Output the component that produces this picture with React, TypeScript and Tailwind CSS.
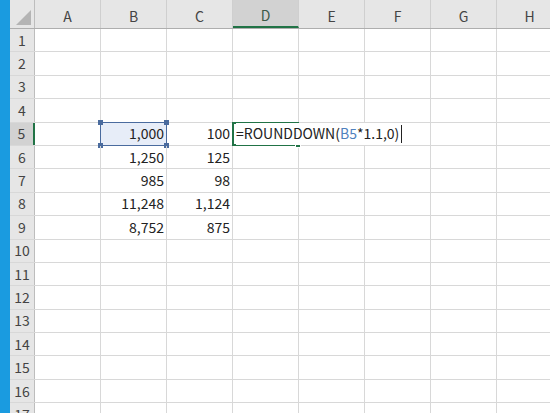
import React from 'react';

const cols = ['A', 'B', 'C', 'D', 'E', 'F', 'G', 'H'];
const rows = Array.from({ length: 17 }, (_, i) => i + 1);

const data: Record<number, { b: string; c: string }> = {
    5: { b: '1,000', c: '100' },
    6: { b: '1,250', c: '125' },
    7: { b: '985', c: '98' },
    8: { b: '11,248', c: '1,124' },
    9: { b: '8,752', c: '875' },
};

const Handle = ({ className }: { className: string }) => (
    <span className={`absolute w-[5px] h-[5px] bg-[#4a6b9e] ${className}`} />
);

export default function App() {
    return (
        <div
            className="w-[550px] h-[413px] overflow-hidden flex bg-white text-[#222]"
            style={{ fontFamily: '"Noto Sans CJK JP", "Noto Sans", sans-serif' }}
        >
            <div className="w-[10px] shrink-0 bg-[#1a9be0]" />
            <div className="flex-1 flex flex-col">
                {/* column headers */}
                <div className="flex h-[29px] shrink-0 bg-[#e6e6e6] border-b border-[#aeaeae]">
                    <div className="relative w-[25px] shrink-0 border-r border-[#bdbdbd]">
                        <svg className="absolute right-[3px] bottom-[3px]" width="15" height="15" viewBox="0 0 15 15">
                            <polygon points="15,0 15,15 0,15" fill="#b4b4b4" />
                        </svg>
                    </div>
                    {cols.map(c => (
                        <div
                            key={c}
                            className={`w-[66px] shrink-0 flex items-center justify-center text-[14px] pt-[4px] border-r border-[#cfcfcf] ${
                                c === 'D'
                                    ? 'bg-[#d2d2d2] text-[#3d5a48] border-b-2 border-b-[#217346]'
                                    : 'text-[#444]'
                            }`}
                        >
                            {c}
                        </div>
                    ))}
                </div>
                {rows.map(r => (
                    <div key={r} className="flex h-[23.4px] shrink-0 border-b border-[#d8d8d8]">
                        <div
                            className={`w-[25px] shrink-0 flex items-center justify-center text-[14px] ${
                                r === 5
                                    ? 'bg-[#d2d2d2] text-[#444] border-r-2 border-r-[#217346]'
                                    : 'bg-[#e6e6e6] text-[#444] border-r border-[#bdbdbd]'
                            }`}
                        >
                            {r}
                        </div>
                        {cols.map(c => {
                            const val = c === 'B' ? data[r]?.b : c === 'C' ? data[r]?.c : undefined;
                            const selB = r === 5 && c === 'B';
                            const editD = r === 5 && c === 'D';
                            return (
                                <div
                                    key={c}
                                    className={`relative w-[66px] shrink-0 border-r border-[#d8d8d8] flex items-center justify-end pr-[2px] text-[14px] ${
                                        selB ? 'bg-[#e7edf8]' : ''
                                    } ${editD ? 'z-10' : ''}`}
                                >
                                    {val}
                                    {selB && (
                                        <span className="absolute -left-[1px] -top-[1px] -right-[1px] -bottom-[1px] border-[1.5px] border-[#4a6b9e]">
                                            <Handle className="-left-[3px] -top-[3px]" />
                                            <Handle className="-right-[3px] -top-[3px]" />
                                            <Handle className="-left-[3px] -bottom-[3px]" />
                                            <Handle className="-right-[3px] -bottom-[3px]" />
                                        </span>
                                    )}
                                    {editD && (
                                        <>
                                            <span className="absolute -left-[1px] -top-[1px] -right-[1px] -bottom-[1px] border-2 border-[#217346]">
                                                <span className="absolute -right-[4px] -bottom-[4px] w-[6px] h-[6px] bg-[#217346] border border-white" />
                                            </span>
                                            <span className="absolute left-[3px] top-0 bottom-0 flex items-center whitespace-nowrap text-[14px] text-[#222] bg-white pr-[2px]">
                                                =ROUNDDOWN(<span className="text-[#4f81bd]">B5</span>*1.1,0)
                                                <span className="ml-[2px] w-px h-[18px] bg-[#222]" />
                                            </span>
                                        </>
                                    )}
                                </div>
                            );
                        })}
                    </div>
                ))}
            </div>
        </div>
    );
}
